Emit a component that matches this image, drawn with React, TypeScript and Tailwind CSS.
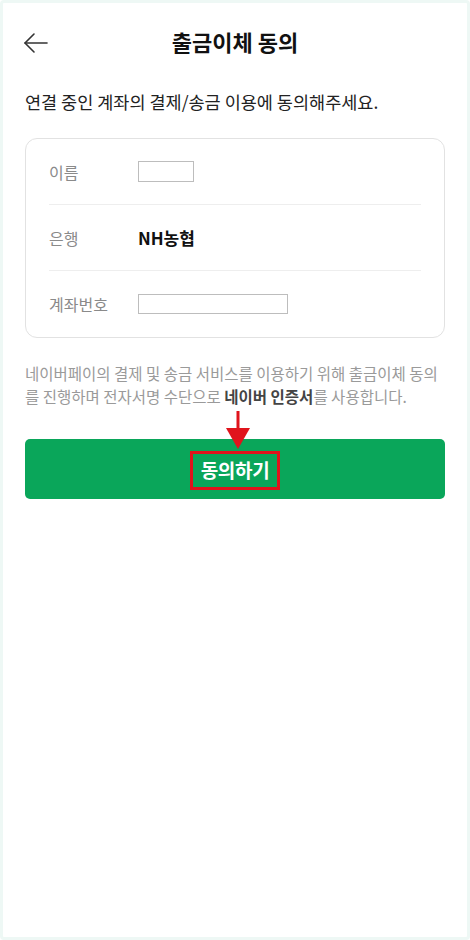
import React from "react";

export default function App() {
  const font = { fontFamily: '"Noto Sans CJK KR", "Noto Sans", sans-serif' };
  return (
    <div
      className="w-[470px] h-[940px] bg-white border-[3px] border-[#eef8f5] rounded-[4px] flex flex-col"
      style={font}
    >
      {/* header */}
      <div className="relative h-[78px] flex items-center justify-center">
        <button className="absolute left-[19px] top-[26px] w-[28px] h-[28px] flex items-center justify-center">
          <svg width="26" height="22" viewBox="0 0 26 22" fill="none" stroke="#333" strokeWidth="1.6" strokeLinecap="round" strokeLinejoin="round">
            <path d="M24 11H2" />
            <path d="M11 2L2 11L11 20" />
          </svg>
        </button>
        <h1 className="text-[22px] font-bold text-[#111] -mt-[1px]">출금이체 동의</h1>
      </div>

      <div className="px-[22px] flex flex-col">
        <p className="mt-[9px] text-[17.5px] text-[#222] leading-[24px]">
          연결 중인 계좌의 결제/송금 이용에 동의해주세요.
        </p>

        {/* card */}
        <div className="mt-[24px] border border-[#e2e2e2] rounded-[12px] px-[23px] flex flex-col">
          <div className="h-[66px] flex items-center border-b border-[#eeeeee]">
            <span className="w-[89px] text-[16px] text-[#8a8a8a]">이름</span>
            <div className="w-[56px] h-[21px] border border-[#bdbdbd] -mt-[1px]" />
          </div>
          <div className="h-[66px] flex items-center border-b border-[#eeeeee]">
            <span className="w-[89px] text-[16px] text-[#8a8a8a]">은행</span>
            <span className="text-[17px] font-bold text-[#111]">NH농협</span>
          </div>
          <div className="h-[66px] flex items-center">
            <span className="w-[89px] text-[16px] text-[#8a8a8a]">계좌번호</span>
            <div className="w-[150px] h-[20px] border border-[#bdbdbd]" />
          </div>
        </div>

        <p className="mt-[24px] text-[15.5px] text-[#9a9a9a] leading-[23px] whitespace-nowrap">
          네이버페이의 결제 및 송금 서비스를 이용하기 위해 출금이체 동의
          <br />를 진행하며 전자서명 수단으로{" "}
          <span className="font-bold text-[#444]">네이버 인증서</span>를 사용합니다.
        </p>

        <div className="relative mt-[31px]">
          <button className="w-full h-[60px] rounded-[5px] bg-[#0aa65a] flex items-center justify-center">
            <span className="px-[8px] h-[39px] mt-[2px] flex items-center border-[3px] border-[#e0141c] text-white text-[19px] font-bold tracking-[-0.3px]">
              동의하기
            </span>
          </button>
          <svg
            className="absolute left-[200px] -top-[28px]"
            width="26"
            height="38"
            viewBox="0 0 26 38"
          >
            <rect x="11.5" y="0" width="3" height="20" fill="#e0141c" />
            <path d="M1 17L25 17L13 38Z" fill="#e0141c" />
          </svg>
        </div>
      </div>
    </div>
  );
}
